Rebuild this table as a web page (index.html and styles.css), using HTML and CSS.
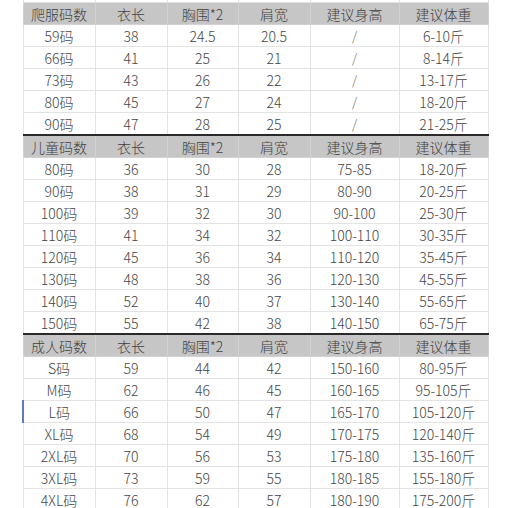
FILE: index.html
```html
<!DOCTYPE html>
<html lang="zh">
<head>
<meta charset="utf-8">
<title>尺码表</title>
<link rel="stylesheet" href="styles.css">
</head>
<body>
<table class="sheet">
  <colgroup>
    <col class="c1"><col class="c2"><col class="c3"><col class="c4"><col class="c5"><col class="c6">
  </colgroup>
  <tbody>
    <tr class="spacer"><td></td><td></td><td></td><td></td><td></td><td></td></tr>
    <tr class="head"><td>爬服码数</td><td>衣长</td><td>胸围*2</td><td>肩宽</td><td>建议身高</td><td>建议体重</td></tr>
    <tr><td>59码</td><td>38</td><td>24.5</td><td>20.5</td><td class="slash">/</td><td>6-10斤</td></tr>
    <tr><td>66码</td><td>41</td><td>25</td><td>21</td><td class="slash">/</td><td>8-14斤</td></tr>
    <tr><td>73码</td><td>43</td><td>26</td><td>22</td><td class="slash">/</td><td>13-17斤</td></tr>
    <tr><td>80码</td><td>45</td><td>27</td><td>24</td><td class="slash">/</td><td>18-20斤</td></tr>
    <tr><td>90码</td><td>47</td><td>28</td><td>25</td><td class="slash">/</td><td>21-25斤</td></tr>
    <tr class="head sep"><td>儿童码数</td><td>衣长</td><td>胸围*2</td><td>肩宽</td><td>建议身高</td><td>建议体重</td></tr>
    <tr><td>80码</td><td>36</td><td>30</td><td>28</td><td>75-85</td><td>18-20斤</td></tr>
    <tr><td>90码</td><td>38</td><td>31</td><td>29</td><td>80-90</td><td>20-25斤</td></tr>
    <tr><td>100码</td><td>39</td><td>32</td><td>30</td><td>90-100</td><td>25-30斤</td></tr>
    <tr><td>110码</td><td>41</td><td>34</td><td>32</td><td>100-110</td><td>30-35斤</td></tr>
    <tr><td>120码</td><td>45</td><td>36</td><td>34</td><td>110-120</td><td>35-45斤</td></tr>
    <tr><td>130码</td><td>48</td><td>38</td><td>36</td><td>120-130</td><td>45-55斤</td></tr>
    <tr><td>140码</td><td>52</td><td>40</td><td>37</td><td>130-140</td><td>55-65斤</td></tr>
    <tr><td>150码</td><td>55</td><td>42</td><td>38</td><td>140-150</td><td>65-75斤</td></tr>
    <tr class="head sep"><td>成人码数</td><td>衣长</td><td>胸围*2</td><td>肩宽</td><td>建议身高</td><td>建议体重</td></tr>
    <tr><td>S码</td><td>59</td><td>44</td><td>42</td><td>150-160</td><td>80-95斤</td></tr>
    <tr><td>M码</td><td>62</td><td>46</td><td>45</td><td>160-165</td><td>95-105斤</td></tr>
    <tr><td class="active">L码</td><td>66</td><td>50</td><td>47</td><td>165-170</td><td>105-120斤</td></tr>
    <tr><td>XL码</td><td>68</td><td>54</td><td>49</td><td>170-175</td><td>120-140斤</td></tr>
    <tr><td>2XL码</td><td>70</td><td>56</td><td>53</td><td>175-180</td><td>135-160斤</td></tr>
    <tr><td>3XL码</td><td>73</td><td>59</td><td>55</td><td>180-185</td><td>155-180斤</td></tr>
    <tr><td>4XL码</td><td>76</td><td>62</td><td>57</td><td>180-190</td><td>175-200斤</td></tr>
  </tbody>
</table>
</body>
</html>
```
FILE: styles.css
```css
html, body {
  margin: 0;
  padding: 0;
  background: #ffffff;
}
body {
  padding-left: 22px;
  overflow: hidden;
  height: 508px;
}
.sheet {
  border-collapse: collapse;
  table-layout: fixed;
  width: 465px;
  font-family: "Noto Sans CJK SC", "Noto Sans", sans-serif;
  font-weight: 300;
  font-size: 14px;
  color: #454545;
}
.c1, .c2 { width: 72px; }
.c3 { width: 71px; }
.c4 { width: 72px; }
.c5, .c6 { width: 89px; }
.sheet td {
  border: 1px solid #e3e3e3;
  height: 21px;
  padding: 0;
  text-align: center;
  vertical-align: middle;
  line-height: 20px;
  white-space: nowrap;
}
.sheet .spacer td {
  height: 2px;
  border-top: none;
  line-height: 0;
}
.sheet .head td {
  background: #c6c6c6;
  border-color: #d2d2d2;
  color: #3f3f3f;
}
.sheet .sep td {
  border-top: 2px solid #2a2a2a;
}
.sheet td.slash {
  color: #6a6a6a;
  font-size: 13px;
}
.sheet td.active {
  border-left: 2px solid #5b7cc4;
}
```
